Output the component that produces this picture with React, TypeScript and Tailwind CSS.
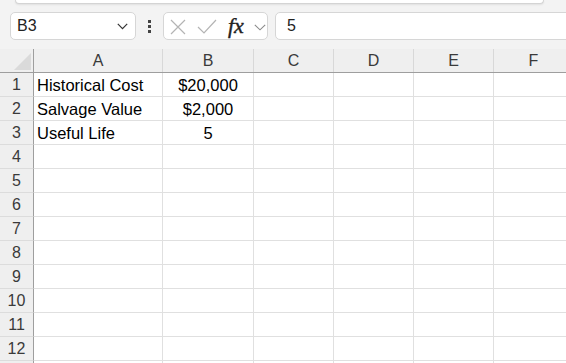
import React from "react";

const cols = ["A", "B", "C", "D", "E", "F"];
const colW = ["w-[129px]", "w-[91px]", "w-[80px]", "w-[80px]", "w-[80px]", "w-[80px]"];

const data: Record<number, [string, string]> = {
  1: ["Historical Cost", "$20,000"],
  2: ["Salvage Value", "$2,000"],
  3: ["Useful Life", "5"],
};

export default function App() {
  const rows = Array.from({ length: 12 }, (_, i) => i + 1);
  return (
    <div
      className="w-[566px] h-[363px] overflow-hidden bg-[#f3f3f3] text-black"
      style={{ fontFamily: '"Liberation Sans", Arial, sans-serif' }}
    >
      {/* top ribbon remnant */}
      <div className="ml-[15px] w-[529px] h-[4px] bg-white border border-t-0 border-[#d4d4d4] rounded-b-[5px] shadow-[0_1px_2px_rgba(0,0,0,0.08)]" />

      {/* formula bar */}
      <div className="mt-[8px] flex items-center h-[28px] pl-[10px]">
        <div className="w-[126px] h-[28px] bg-white border border-[#d6d6d6] rounded-[5px] flex items-center justify-between pl-[6px] pr-[7px]">
          <span className="text-[16px] text-[#222]">B3</span>
          <svg width="11" height="7" viewBox="0 0 11 7" className="mt-[1px]">
            <path d="M0.8 0.8 L5.5 5.6 L10.2 0.8" fill="none" stroke="#333" strokeWidth="1.2" />
          </svg>
        </div>
        <div className="w-[27px] flex flex-col items-center gap-[2px]">
          <div className="w-[3px] h-[3px] bg-[#444]" />
          <div className="w-[3px] h-[3px] bg-[#444]" />
          <div className="w-[3px] h-[3px] bg-[#444]" />
        </div>
        <div className="w-[105px] h-[28px] bg-white border border-[#d6d6d6] rounded-[5px] flex items-center relative">
          <svg width="16" height="16" viewBox="0 0 16 16" className="absolute left-[6px] top-[6px]">
            <path d="M1 1 L15 15 M15 1 L1 15" stroke="#b4b4b4" strokeWidth="1.2" fill="none" />
          </svg>
          <svg width="20" height="15" viewBox="0 0 20 15" className="absolute left-[33px] top-[6px]">
            <path d="M1 8 L7 14 L19 1" stroke="#b4b4b4" strokeWidth="1.2" fill="none" />
          </svg>
          <span
            className="absolute left-[64px] top-[2px] italic text-[22px] text-[#222] leading-[22px]"
            style={{ fontFamily: '"Liberation Serif", "Times New Roman", serif', WebkitTextStroke: "0.4px #222" }}
          >
            fx
          </span>
          <svg width="12" height="7" viewBox="0 0 12 7" className="absolute left-[90px] top-[11px]">
            <path d="M0.8 0.8 L6 5.8 L11.2 0.8" fill="none" stroke="#8a8a8a" strokeWidth="1.1" />
          </svg>
        </div>
        <div className="ml-[7px] flex-1 -mr-[20px] h-[28px] bg-white border border-[#d6d6d6] rounded-[5px] flex items-center pl-[11px]">
          <span className="text-[16px] text-[#222]">5</span>
        </div>
      </div>

      {/* grid */}
      <div className="mt-[9px] w-[574px]">
        <div className="flex h-[24px] bg-[#efefef] border-b border-[#9e9e9e]">
          <div className="w-[34px] shrink-0 border-r border-[#9e9e9e] relative">
            <div
              className="absolute right-[2px] bottom-[2px] w-[17px] h-[17px] bg-[#dadada]"
              style={{ clipPath: "polygon(100% 0, 100% 100%, 0 100%)" }}
            />
          </div>
          {cols.map((c, i) => (
            <div
              key={c}
              className={`${colW[i]} shrink-0 border-r border-[#d8d8d8] flex items-center justify-center pt-[1px] text-[16px] text-[#3a3a3a]`}
            >
              {c}
            </div>
          ))}
        </div>
        {rows.map((r) => (
          <div key={r} className="flex h-[24px]">
            <div className="w-[34px] shrink-0 bg-[#efefef] border-r border-[#9e9e9e] border-b border-b-[#dcdcdc] flex items-center justify-center pt-[1px] text-[16px] text-[#3a3a3a]">
              {r}
            </div>
            {cols.map((c, i) => (
              <div
                key={c}
                className={`${colW[i]} shrink-0 bg-white border-r border-b border-[#e0e0e0] flex items-center pt-[1px] text-[16.5px] ${
                  i === 1 ? "justify-center" : "pl-[3px]"
                }`}
              >
                {data[r] ? (i === 0 ? data[r][0] : i === 1 ? data[r][1] : "") : ""}
              </div>
            ))}
          </div>
        ))}
        <div className="flex h-[24px]">
          <div className="w-[34px] shrink-0 bg-[#efefef] border-r border-[#9e9e9e]" />
          {cols.map((c, i) => (
            <div key={c} className={`${colW[i]} shrink-0 bg-white border-r border-[#e0e0e0]`} />
          ))}
        </div>
      </div>
    </div>
  );
}
